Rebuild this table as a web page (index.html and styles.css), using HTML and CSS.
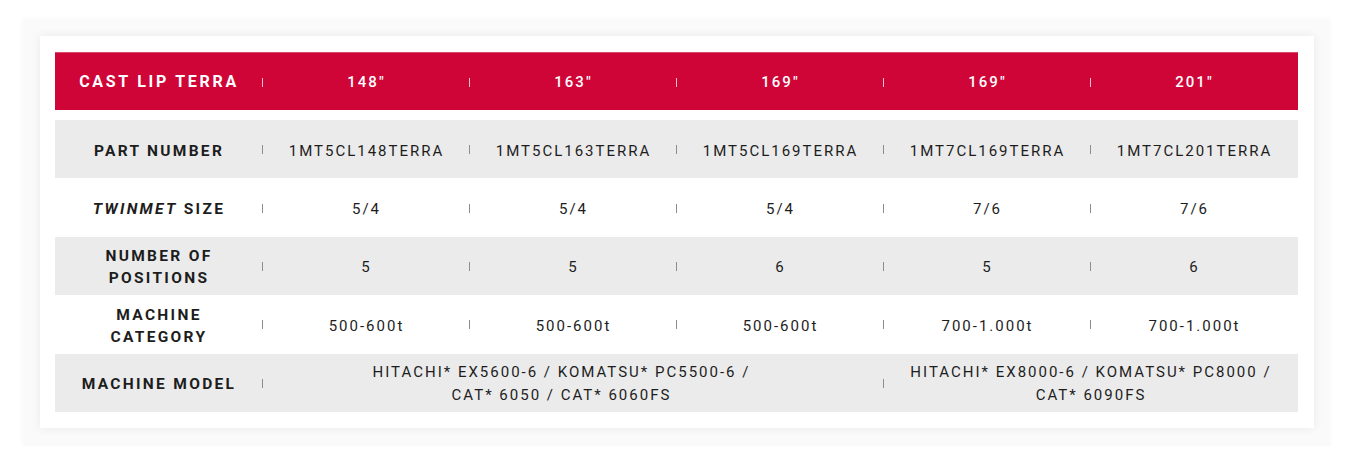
FILE: index.html
```html
<!DOCTYPE html>
<html>
<head>
<meta charset="utf-8">
<link rel="stylesheet" href="styles.css">
</head>
<body>
<div class="outer">
  <div class="card">
    <div class="table">
      <div class="row head">
        <div class="cell label sep">CAST LIP TERRA</div>
        <div class="cell sep">148"</div>
        <div class="cell sep">163"</div>
        <div class="cell sep">169"</div>
        <div class="cell sep">169"</div>
        <div class="cell">201"</div>
      </div>
      <div class="row grey">
        <div class="cell label sep">PART NUMBER</div>
        <div class="cell sep">1MT5CL148TERRA</div>
        <div class="cell sep">1MT5CL163TERRA</div>
        <div class="cell sep">1MT5CL169TERRA</div>
        <div class="cell sep">1MT7CL169TERRA</div>
        <div class="cell">1MT7CL201TERRA</div>
      </div>
      <div class="row">
        <div class="cell label sep"><span><em>TWINMET</em> SIZE</span></div>
        <div class="cell sep">5/4</div>
        <div class="cell sep">5/4</div>
        <div class="cell sep">5/4</div>
        <div class="cell sep">7/6</div>
        <div class="cell">7/6</div>
      </div>
      <div class="row grey">
        <div class="cell label sep">NUMBER OF<br>POSITIONS</div>
        <div class="cell sep">5</div>
        <div class="cell sep">5</div>
        <div class="cell sep">6</div>
        <div class="cell sep">5</div>
        <div class="cell">6</div>
      </div>
      <div class="row">
        <div class="cell label sep">MACHINE<br>CATEGORY</div>
        <div class="cell sep">500-600t</div>
        <div class="cell sep">500-600t</div>
        <div class="cell sep">500-600t</div>
        <div class="cell sep">700-1.000t</div>
        <div class="cell">700-1.000t</div>
      </div>
      <div class="row grey">
        <div class="cell label sep">MACHINE MODEL</div>
        <div class="cell span3 sep">HITACHI* EX5600-6 / KOMATSU* PC5500-6 /<br>CAT* 6050 / CAT* 6060FS</div>
        <div class="cell span2">HITACHI* EX8000-6 / KOMATSU* PC8000 /<br>CAT* 6090FS</div>
      </div>
    </div>
  </div>
</div>
</body>
</html>
```

FILE: styles.css
```css
html, body {
  margin: 0;
  padding: 0;
  background: #ffffff;
}
body {
  font-family: Roboto, "Liberation Sans", sans-serif;
  color: #1d1d1d;
}
.outer {
  margin: 19px 0 0 23px;
  width: 1307px;
  height: 427px;
  box-sizing: border-box;
  padding: 17px 16px 18px 17px;
  background: #fafafa;
  box-shadow: 0 0 6px rgba(0,0,0,0.03);
}
.card {
  background: #ffffff;
  box-shadow: 0 0 10px rgba(0,0,0,0.07);
  padding: 16px 16px 16px 15px;
}
.table {
  display: flex;
  flex-direction: column;
  width: 1243px;
}
.row {
  display: grid;
  grid-template-columns: 208px repeat(5, 207px);
  height: 58.4px;
  background: #ffffff;
}
.row.grey {
  background: #ebebeb;
}
.row.head {
  height: 58px;
  background: #cf0538;
  color: #ffffff;
  margin-bottom: 10px;
  border-top: 1px solid #d84a6a;
  box-sizing: border-box;
}
.cell {
  position: relative;
  display: flex;
  align-items: center;
  justify-content: center;
  text-align: center;
  font-size: 15px;
  letter-spacing: 2px;
  line-height: 22px;
  font-weight: 400;
  padding-top: 3px;
  box-sizing: border-box;
}
.head .cell {
  font-weight: 500;
  padding-top: 0;
}
.cell.label {
  font-weight: 700;
  font-size: 15.5px;
  letter-spacing: 2.3px;
}
.head .cell.label {
  font-size: 16px;
  letter-spacing: 2.7px;
}
.cell em {
  font-style: italic;
}
.sep::after {
  content: "";
  position: absolute;
  right: 0;
  top: 50%;
  width: 1px;
  height: 9px;
  margin-top: -4px;
  background: #8c8c8c;
}
.head .sep::after {
  background: rgba(255,255,255,0.75);
}
.span3 {
  grid-column: span 3;
  padding-right: 24px;
  line-height: 23px;
}
.span2 {
  grid-column: span 2;
  line-height: 23px;
}
```
